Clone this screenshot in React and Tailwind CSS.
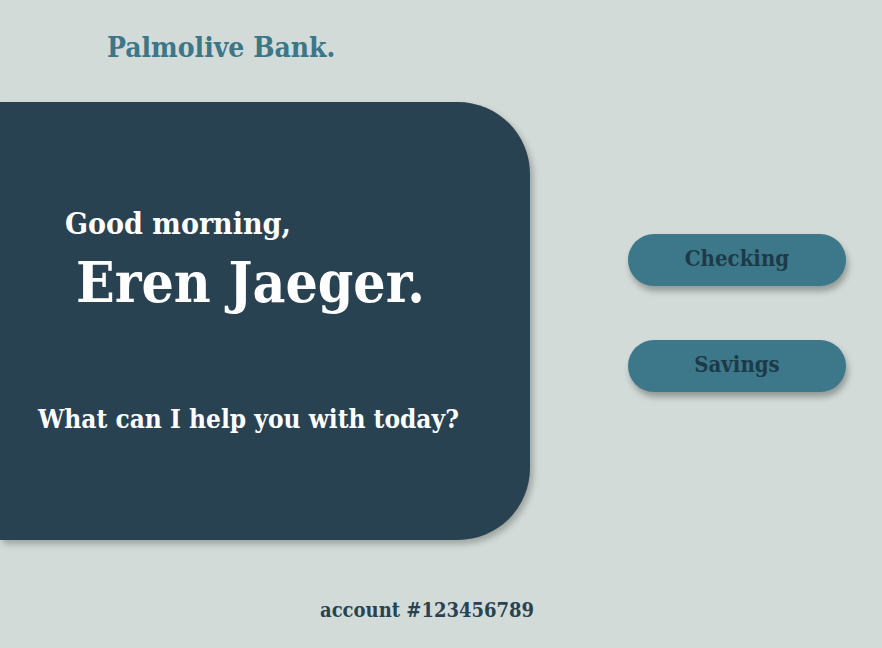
export default function App() {
  const font = { fontFamily: '"DejaVu Serif Condensed", "DejaVu Serif", serif' };
  return (
    <div className="w-[882px] h-[648px] bg-[#d2dbd7] flex flex-col overflow-hidden" style={font}>
      <div className="h-[102px] pl-[107px] pt-[30px]">
        <div className="text-[28px] leading-[36px] font-bold text-[#3b7689]">Palmolive Bank.</div>
      </div>
      <div className="flex">
        <div className="w-[530px] h-[438px] bg-[#294251] rounded-r-[72px] shadow-[3px_4px_6px_rgba(0,0,0,0.25)] flex flex-col">
          <div className="pl-[65px] pt-[104px] text-[30px] leading-[36px] font-bold text-white">Good morning,</div>
          <div className="pl-[76px] pt-[10px] text-[56.5px] leading-[60px] font-bold text-white">Eren Jaeger.</div>
          <div className="pl-[38px] pt-[90px] text-[26px] leading-[34px] font-bold text-white">What can I help you with today?</div>
        </div>
        <div className="flex flex-col pl-[98px] pt-[132px] gap-[54px]">
          <button className="w-[218px] h-[52px] pb-[3px] rounded-full bg-[#3c788a] text-[#1d3a48] text-[22px] font-bold shadow-[2px_5px_6px_rgba(0,0,0,0.3)]">Checking</button>
          <button className="w-[218px] h-[52px] pb-[4px] rounded-full bg-[#3c788a] text-[#1d3a48] text-[22px] font-bold shadow-[2px_5px_6px_rgba(0,0,0,0.3)]">Savings</button>
        </div>
      </div>
      <div className="pl-[320px] pt-[54px]">
        <div className="text-[20px] leading-[32px] font-bold text-[#294251]">account #123456789</div>
      </div>
    </div>
  );
}
